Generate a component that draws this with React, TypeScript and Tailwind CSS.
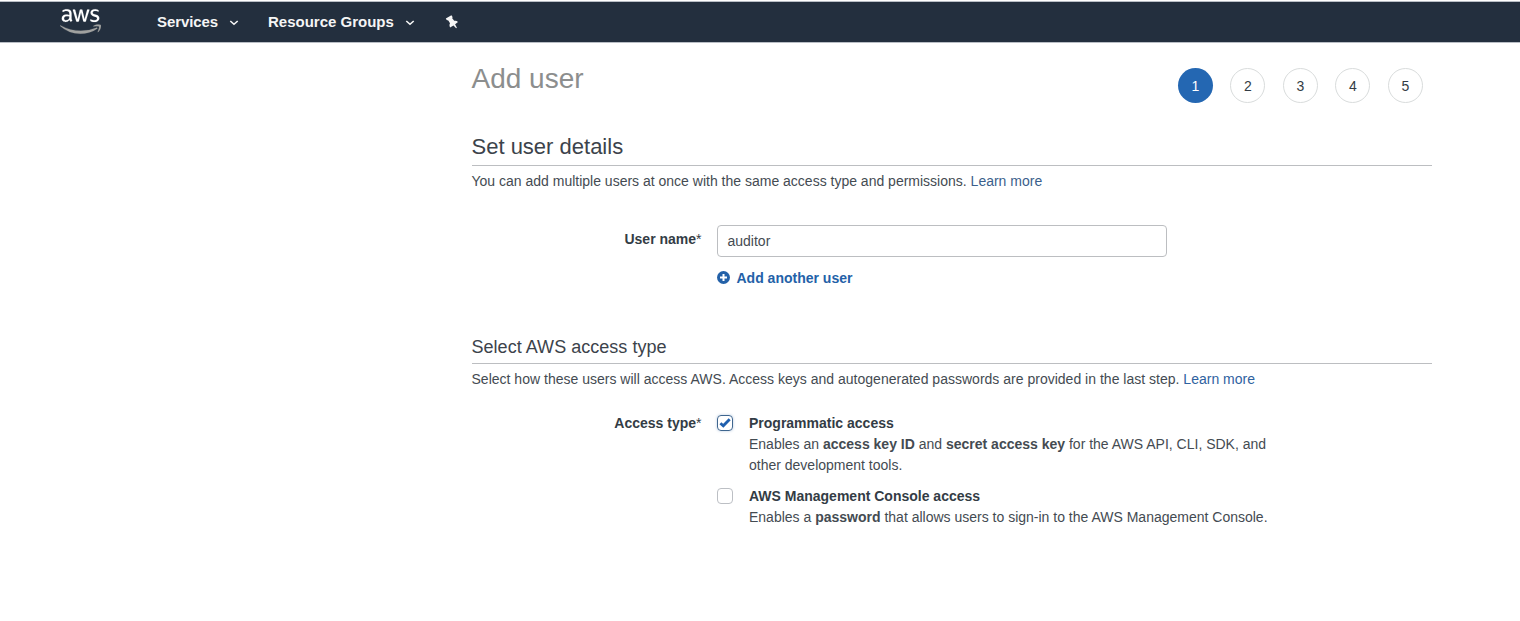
import type { ReactNode } from "react";
import { FaAws } from "react-icons/fa";

function Caret() {
  return (
    <svg viewBox="0 0 10 6" className="h-[6px] w-[10px]" fill="none" stroke="#f5f5f5" strokeWidth="1.6">
      <path d="M1.3 1L5 4.3L8.7 1" />
    </svg>
  );
}

function Pin() {
  return (
    <svg viewBox="0 0 14 14" className="ml-[30px] mt-[13px] size-[14px]" fill="#f5f5f5">
      <path d="M0.8 3.4L6.4 0.2L7.6 1.9L7.2 3.2L9.2 5.8C10.7 5.4 12 5.8 13 7L10.1 9.3L11.9 12.8L11.1 13.3L8.5 10.5L5.1 12.5C4.3 11 4.3 9.6 5 8.3L3.3 5.5L1.7 5.1Z" />
    </svg>
  );
}

function Step({ n, active }: { n: number; active?: boolean }) {
  return (
    <div
      className={
        active
          ? "flex size-[35px] items-center justify-center rounded-full bg-[#2467b2] text-white"
          : "flex size-[35px] items-center justify-center rounded-full border border-[#d9dcdc] text-[#333c45]"
      }
    >
      {n}
    </div>
  );
}

function Box({ checked }: { checked?: boolean }) {
  return checked ? (
    <span className="mt-[2px] flex size-4 shrink-0 items-center justify-center rounded-[4px] border border-[#3f668f] shadow-[0_0_3px_#b9cbe0]">
      <svg viewBox="0 0 12 10" className="h-[10px] w-[12px]" fill="none" stroke="#1f5fae" strokeWidth="2.8">
        <path d="M1.4 5.2L4.3 7.8L10.7 1.2" />
      </svg>
    </span>
  ) : (
    <span className="mt-[2px] size-4 shrink-0 rounded-[4px] border border-[#bcbfc4]" />
  );
}

function Option({ title, checked, children }: { title: string; checked?: boolean; children: ReactNode }) {
  return (
    <div className="flex gap-4">
      <Box checked={checked} />
      <div className="w-[530px] leading-[21px]">
        <div className="font-bold text-[#333c45]">{title}</div>
        <p>{children}</p>
      </div>
    </div>
  );
}

export default function App() {
  return (
    <div className="h-[621px] w-[1520px] overflow-hidden bg-white font-['Liberation_Sans',Arial,sans-serif] text-sm text-[#444b52]">
      <header className="mt-px flex h-[42px] items-start border-y border-[#b9bec5] bg-[#232f3e] pl-[60px] text-[15px] font-bold text-[#f5f5f5]">
        <svg className="size-0" aria-hidden="true">
          <linearGradient id="logo-fill" gradientUnits="userSpaceOnUse" x1="0" y1="0" x2="0" y2="512">
            <stop offset="0.57" stopColor="#fff" />
            <stop offset="0.57" stopColor="#a0a19f" />
          </linearGradient>
        </svg>
        <FaAws fill="url(#logo-fill)" stroke="url(#logo-fill)" strokeWidth={2} className="mt-[3px] h-[33px] w-[41px]" />
        <span className="ml-[56px] mt-[9px] w-[61px] leading-[22px] tracking-[-0.1px]">Services</span>
        <span className="ml-[11px] mt-[18px]"><Caret /></span>
        <span className="ml-[29px] mt-[9px] w-[126px] whitespace-nowrap leading-[22px]">Resource Groups</span>
        <span className="ml-[11px] mt-[18px]"><Caret /></span>
        <Pin />
      </header>

      <main className="ml-[471.5px] w-[960.5px]">
        <div className="flex h-[82px] items-start justify-between pr-[9.1px]">
          <h1 className="mt-[18px] text-[28px] leading-9 text-[#8c8e8e]">Add user</h1>
          <div className="mt-[25px] flex gap-[17.5px]">
            <Step n={1} active />
            <Step n={2} />
            <Step n={3} />
            <Step n={4} />
            <Step n={5} />
          </div>
        </div>

        <section>
          <h2 className="h-[41px] border-b border-[#bcbec1] pt-[8px] text-[22px] leading-7 text-[#3c434b]">Set user details</h2>
          <p className="mt-[5px] leading-5">
            You can add multiple users at once with the same access type and permissions. <a className="text-[#3b5f8c]">Learn more</a>
          </p>
          <div className="mt-[34px] flex">
            <div className="w-[230px] pt-1 text-right font-bold leading-5 text-[#333c45]">
              User name<span className="font-normal">*</span>
            </div>
            <div className="ml-[15.5px]">
              <div className="flex h-8 w-[450px] items-center rounded-[4px] border border-[#bcbec1] pl-[9.5px]">auditor</div>
              <a className="mt-[11px] flex items-center gap-[6.5px] font-bold leading-5 text-[#2361a8]">
                <svg viewBox="0 0 13 13" className="mt-[-2px] size-[13px]">
                  <circle cx="6.5" cy="6.5" r="6.5" fill="#2361a8" />
                  <path d="M6.5 3v7M3 6.5h7" stroke="#fff" strokeWidth="2" />
                </svg>
                Add another user
              </a>
            </div>
          </div>
        </section>

        <section className="mt-[46px]">
          <h3 className="h-[30px] border-b border-[#bcbec1] text-[18px] leading-[26px] tracking-[0.03px] text-[#3c434b]">Select AWS access type</h3>
          <p className="mt-[5px] leading-5 tracking-[0.01px]">
            Select how these users will access AWS. Access keys and autogenerated passwords are provided in the last step. <a className="text-[#2f629f]">Learn more</a>
          </p>
          <div className="mt-[24px] flex">
            <div className="w-[230px] text-right font-bold leading-[21px] text-[#333c45]">
              Access type<span className="font-normal">*</span>
            </div>
            <div className="ml-[15.5px] flex flex-col gap-[10px]">
              <Option title="Programmatic access" checked>
                Enables an <b>access key ID</b> and <b>secret access key</b> for the AWS API, CLI, SDK, and other development tools.
              </Option>
              <Option title="AWS Management Console access">
                Enables a <b>password</b> that allows users to sign-in to the AWS Management Console.
              </Option>
            </div>
          </div>
        </section>
      </main>
    </div>
  );
}
